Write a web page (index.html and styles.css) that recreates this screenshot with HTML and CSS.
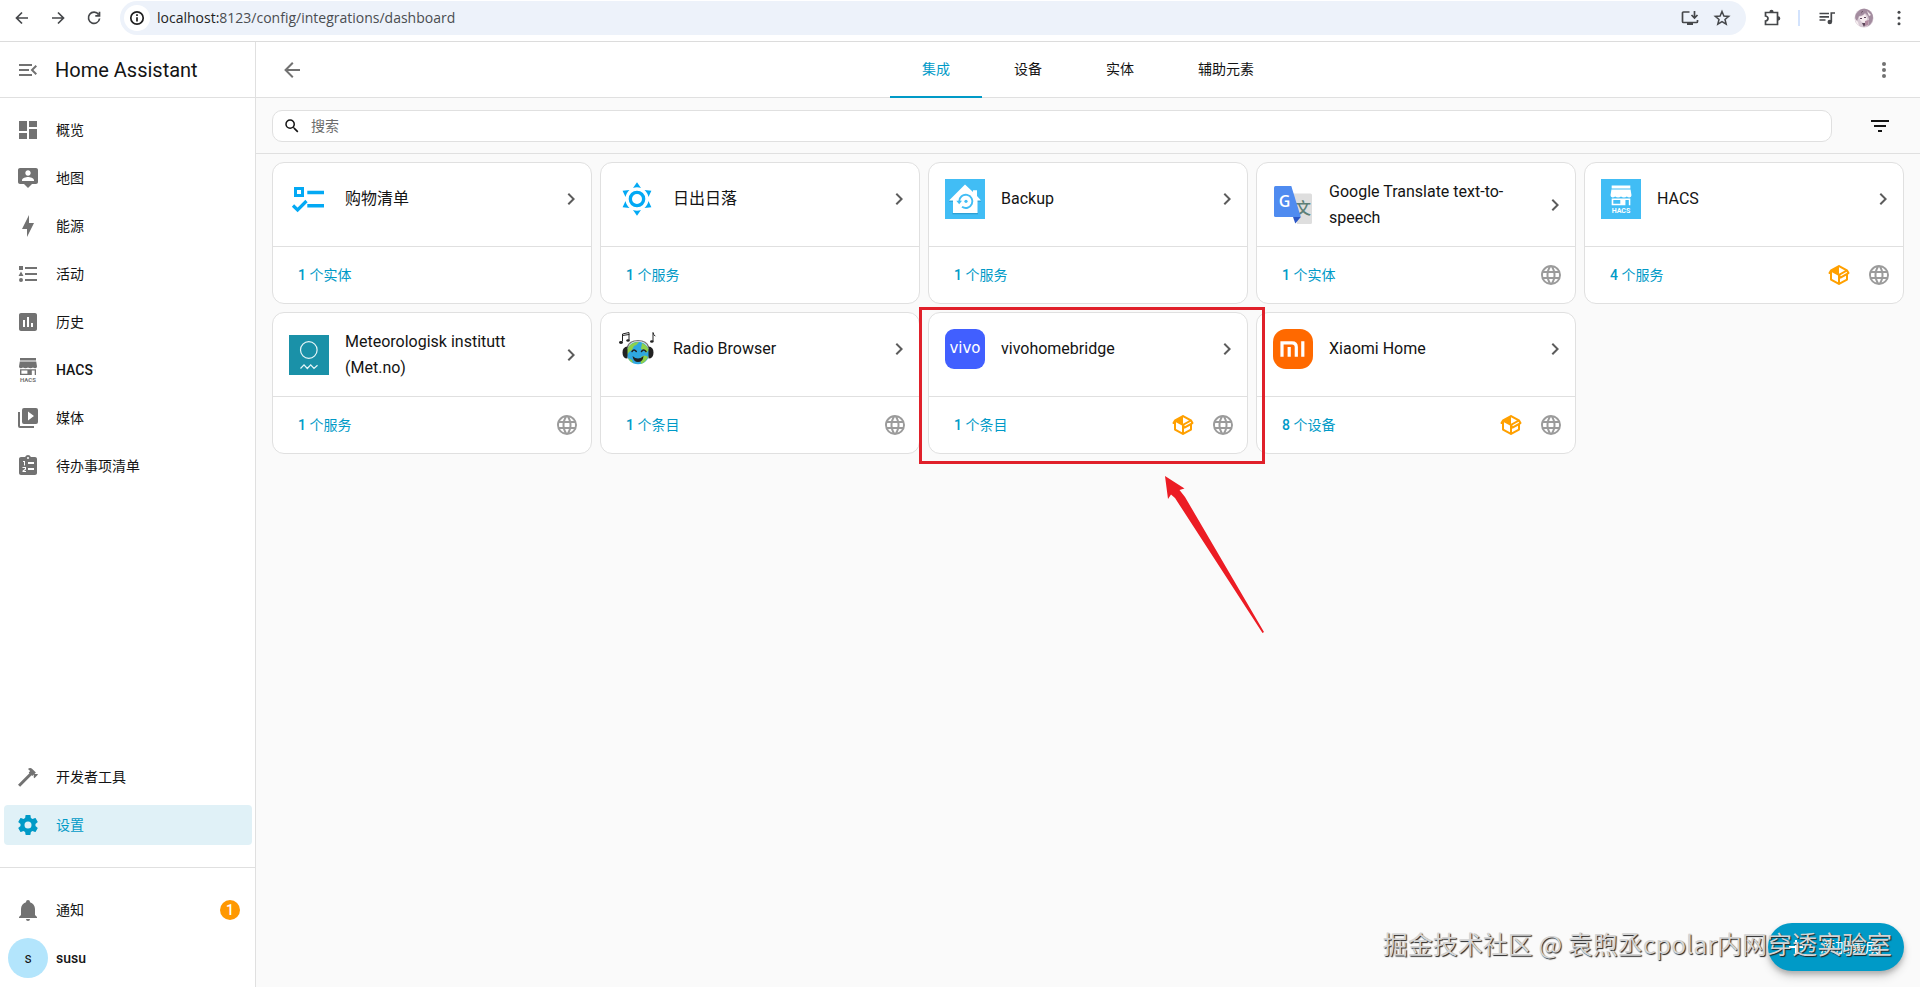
FILE: index.html
```html
<!DOCTYPE html>
<html lang="zh-CN">
<head>
<meta charset="utf-8">
<title>设置 – Home Assistant</title>
<link rel="stylesheet" href="styles.css">
</head>
<body>
<svg class="defs" aria-hidden="true">
  <symbol id="arrow-left" viewBox="0 0 24 24"><path d="M20,11V13H8L13.5,18.5L12.08,19.92L4.16,12L12.08,4.08L13.5,5.5L8,11H20Z"/></symbol>
  <symbol id="chevron" viewBox="0 0 24 24"><path d="M8.59,16.58L13.17,12L8.59,7.41L10,6L16,12L10,18L8.59,16.58Z"/></symbol>
  <symbol id="dots" viewBox="0 0 24 24"><circle cx="12" cy="6" r="2"/><circle cx="12" cy="12" r="2"/><circle cx="12" cy="18" r="2"/></symbol>
  <symbol id="web" viewBox="0 0 24 24"><path d="M16.36,14C16.44,13.34 16.5,12.68 16.5,12C16.5,11.32 16.44,10.66 16.36,10H19.74C19.9,10.64 20,11.31 20,12C20,12.69 19.9,13.36 19.74,14M14.59,19.56C15.19,18.45 15.65,17.25 15.97,16H18.92C17.96,17.65 16.43,18.93 14.59,19.56M14.34,14H9.66C9.56,13.34 9.5,12.68 9.5,12C9.5,11.32 9.56,10.65 9.66,10H14.34C14.43,10.65 14.5,11.32 14.5,12C14.5,12.68 14.43,13.34 14.34,14M12,19.96C11.17,18.76 10.5,17.43 10.09,16H13.91C13.5,17.43 12.83,18.76 12,19.96M8,8H5.08C6.03,6.34 7.57,5.06 9.4,4.44C8.8,5.55 8.35,6.75 8,8M5.08,16H8C8.35,17.25 8.8,18.45 9.4,19.56C7.57,18.93 6.03,17.65 5.08,16M4.26,14C4.1,13.36 4,12.69 4,12C4,11.31 4.1,10.64 4.26,10H7.64C7.56,10.66 7.5,11.32 7.5,12C7.5,12.68 7.56,13.34 7.64,14M12,4.03C12.83,5.23 13.5,6.57 13.91,8H10.09C10.5,6.57 11.17,5.23 12,4.03M18.92,8H15.97C15.65,6.75 15.19,5.55 14.59,4.44C16.43,5.07 17.96,6.34 18.92,8M12,2C6.47,2 2,6.5 2,12A10,10 0 0,0 12,22A10,10 0 0,0 22,12A10,10 0 0,0 12,2Z"/></symbol>
  <symbol id="package" viewBox="0 0 24 24"><path d="M2,10.96C1.5,10.68 1.35,10.07 1.63,9.59L3.13,7C3.24,6.8 3.41,6.66 3.6,6.58L11.43,2.18C11.59,2.06 11.79,2 12,2C12.21,2 12.41,2.06 12.57,2.18L20.47,6.62C20.66,6.72 20.82,6.88 20.91,7.08L22.36,9.6C22.64,10.08 22.47,10.69 22,10.96L21,11.54V16.5C21,16.88 20.79,17.21 20.47,17.38L12.57,21.82C12.41,21.94 12.21,22 12,22C11.79,22 11.59,21.94 11.43,21.82L3.53,17.38C3.21,17.21 3,16.88 3,16.5V10.96C2.7,11.13 2.32,11.14 2,10.96M12,4.15V4.15L12,10.85V10.85L17.96,7.5L12,4.15M5,15.91L11,19.29V12.58L5,9.21V15.91M19,15.91V12.69L14,15.59C13.67,15.77 13.3,15.76 13,15.6V19.29L19,15.91M13.85,13.36L20.13,9.73L19.55,8.72L13.27,12.35L13.85,13.36Z"/></symbol>
  <symbol id="shop" viewBox="0 0 24 24"><path fill-rule="evenodd" d="M4 0H20V2.6H4ZM3.800 3.400H20.200L21 8.400Q21 10.200 19.300 10.200Q17.700 10.200 17 9.400Q16 10.200 14.500 10.200Q13 10.200 12 9.400Q11 10.200 9.500 10.200Q8 10.200 7 9.400Q6 10.200 4.700 10.200Q3 10.200 3 8.400ZM4 11.200H20V17H18.700V12.400H15.800V17H4ZM5.400 12.400V15.700H11.400V12.400Z"/><text x="12" y="23.600" text-anchor="middle" class="shop-name">HACS</text></symbol>
</svg>

<header class="browser">
  <button class="tool" aria-label="后退"><svg class="i20" viewBox="0 0 20 20"><path class="line" d="M16 10H5M10 4.500 4.500 10 10 15.500"/></svg></button>
  <button class="tool" aria-label="前进"><svg class="i20" viewBox="0 0 20 20"><path class="line" d="M4 10H15M10 4.500 15.500 10 10 15.500"/></svg></button>
  <button class="tool" aria-label="重新加载"><svg class="i20" viewBox="0 0 20 20"><path class="line" d="M14.600 6.500A5.600 5.600 0 1 0 15.600 10.500M15.500 3.800V7.800H11.300"/></svg></button>
  <div class="address">
    <button class="site-info" aria-label="网站信息"><svg class="i20" viewBox="0 0 20 20"><circle class="line" cx="10" cy="10" r="6.200"/><path class="line" d="M10 9.200V13.400M10 6.300V7.900"/></svg></button>
    <div class="url"><span class="host">localhost:</span>8123/config/integrations/dashboard</div>
    <button class="tool small" aria-label="安装"><svg class="i20" viewBox="0 0 20 20"><path class="line" d="M9.500 4H3.500Q2.500 4 2.500 5V13.500Q2.500 14.500 3.500 14.500H16.500Q17.500 14.500 17.500 13.500V12M14.500 3V9.500M11.500 7 14.500 10 17.500 7"/><path d="M7 14.500H13V17H7Z"/></svg></button>
    <button class="tool small" aria-label="收藏"><svg class="i20" viewBox="0 0 20 20"><path class="line thin" d="M10 3.500 11.900 8 16.700 8.400 13 11.500 14.200 16.200 10 13.700 5.800 16.200 7 11.500 3.300 8.400 8.100 8Z"/></svg></button>
  </div>
  <button class="tool ext" aria-label="扩展程序"><svg class="i20" viewBox="0 0 20 20"><path class="line" d="M3.500 4.500H15.500V16.500H3.500V13Q6 12.500 6 10.500Q6 8.500 3.500 8Z"/><path d="M7.400 4A2 2.200 0 0 1 11.600 4ZM16 8.300A2.200 2 0 0 1 16 12.500Z"/></svg></button>
  <span class="bar"></span>
  <button class="tool media" aria-label="媒体控件"><svg class="i20" viewBox="0 0 20 20"><path class="line" d="M2.500 5.500H12M2.500 8.800H12M2.500 12H8.500M14.300 14V5H18"/><circle cx="12.800" cy="14" r="2.300"/></svg></button>
  <button class="tool face" aria-label="个人资料"><svg class="i20" viewBox="0 0 20 20"><circle cx="10" cy="10" r="9.500" fill="#d6c8d3"/><path fill="#a38c9f" d="M2 6Q6 0 12 1Q19 3 19 10Q18 16 14 18Q16 13 14 8L11 5Q9 8 5 8L3 13Q0 10 2 6Z"/><path fill="#f6edf0" d="M5 9Q9 8 11 6L13 10Q13 14 10 15Q6 14 5 9ZM13 3L17 7L15 8ZM1 11L4 14L5 18Q2 16 1 11Z"/><path fill="#5b4559" d="M6 10H8V11H6ZM10 9H12V10H10ZM8 15H12L10 19ZM8 3H9L7 6Z"/><path fill="#b08aa0" d="M11 13L15 12L14 17L11 18Z"/></svg></button>
  <button class="tool more" aria-label="菜单"><svg class="i20" viewBox="0 0 20 20"><circle cx="10" cy="4.300" r="1.500"/><circle cx="10" cy="10" r="1.500"/><circle cx="10" cy="15.700" r="1.500"/></svg></button>
</header>

<div class="app">
  <aside class="sidebar">
    <div class="brand">
      <button class="icon-btn" aria-label="收起侧边栏"><svg class="i24" viewBox="0 0 24 24"><path d="M21,15.61L19.59,17L14.58,12L19.59,7L21,8.390L17.44,12L21,15.610M3,6H16V8H3V6M3,13V11H13V13H3M3,18V16H16V18H3Z"/></svg></button>
      <h1>Home Assistant</h1>
    </div>
    <nav class="menu">
      <a href="#overview"><svg class="i24" viewBox="0 0 24 24"><path d="M13,3V9H21V3M13,21H21V11H13M3,21H11V15H3M3,13H11V3H3V13Z"/></svg>概览</a>
      <a href="#map"><svg class="i24" viewBox="0 0 24 24"><path fill-rule="evenodd" d="M20 2H4C2.900 2 2 2.900 2 4V16C2 17.100 2.900 18 4 18H8L12 22L16 18H20C21.110 18 22 17.110 22 16V4C22 2.900 21.110 2 20 2M12 4.300C13.500 4.300 14.700 5.500 14.700 7S13.500 9.700 12 9.700 9.300 8.500 9.300 7 10.500 4.300 12 4.300M18 15H6V14.100C6 12.100 10 11 12 11S18 12.100 18 14.100V15Z"/></svg>地图</a>
      <a href="#energy"><svg class="i24" viewBox="0 0 24 24"><path d="M11 15H6L13 1V9H18L11 23V15Z"/></svg>能源</a>
      <a href="#logbook"><svg class="i24" viewBox="0 0 24 24"><path d="M5,9.500L7.500,14H2.500L5,9.500M3,4H7V8H3V4M5,20A2,2 0 0,0 7,18A2,2 0 0,0 5,16A2,2 0 0,0 3,18A2,2 0 0,0 5,20M9,5V7H21V5H9M9,19H21V17H9V19M9,13H21V11H9V13Z"/></svg>活动</a>
      <a href="#history"><svg class="i24" viewBox="0 0 24 24"><path fill-rule="evenodd" d="M19 3H5C3.900 3 3 3.900 3 5V19C3 20.100 3.900 21 5 21H19C20.100 21 21 20.100 21 19V5C21 3.900 20.100 3 19 3M9 17H7V10H9V17M13 17H11V7H13V17M17 17H15V13H17V17Z"/></svg>历史</a>
      <a href="#hacs" class="latin"><svg class="i24"><use href="#shop"/></svg>HACS</a>
      <a href="#media"><svg class="i24" viewBox="0 0 24 24"><path fill-rule="evenodd" d="M4,6H2V20A2,2 0 0,0 4,22H18V20H4V6M20,2H8A2,2 0 0,0 6,4V16A2,2 0 0,0 8,18H20A2,2 0 0,0 22,16V4A2,2 0 0,0 20,2M12,14.500V5.500L18,10L12,14.500Z"/></svg>媒体</a>
      <a href="#todo"><svg class="i24" viewBox="0 0 24 24"><path fill-rule="evenodd" d="M19 3H14.820C14.400 1.840 13.300 1 12 1S9.600 1.840 9.180 3H5C3.900 3 3 3.900 3 5V19C3 20.100 3.900 21 5 21H19C20.100 21 21 20.100 21 19V5C21 3.900 20.100 3 19 3M12 3A1 1 0 1 1 12 5A1 1 0 0 1 12 3M12 8H18V10H12ZM12 14H18V16H12ZM7 7H9V11.500H8V8H7ZM6.500 13H10V15.500L8 17H10V18H6.500V16.700L9 14.800V14H6.500Z"/></svg>待办事项清单</a>
      <span class="spacer"></span>
      <a href="#dev"><svg class="i24" viewBox="0 0 24 24"><path d="M2 19.630L13.430 8.200L12.720 7.500L14.140 6.070L12 3.890C13.200 2.700 15.090 2.700 16.270 3.890L19.870 7.500L18.450 8.910H21.290L22 9.620L18.450 13.210L17.740 12.500V9.620L16.270 11.040L15.560 10.330L4.130 21.760L2 19.630Z"/></svg>开发者工具</a>
      <a href="#config" class="current" aria-current="page"><svg class="i24" viewBox="0 0 24 24"><path d="M12,15.5A3.5,3.5 0 0,1 8.5,12A3.5,3.5 0 0,1 12,8.5A3.5,3.5 0 0,1 15.5,12A3.5,3.5 0 0,1 12,15.5M19.43,12.97C19.47,12.65 19.5,12.33 19.5,12C19.5,11.67 19.47,11.34 19.43,11L21.54,9.37C21.73,9.22 21.78,8.95 21.66,8.73L19.66,5.27C19.54,5.05 19.27,4.96 19.05,5.05L16.56,6.05C16.04,5.66 15.5,5.32 14.87,5.07L14.5,2.42C14.46,2.18 14.25,2 14,2H10C9.75,2 9.54,2.18 9.5,2.42L9.13,5.07C8.5,5.32 7.96,5.66 7.44,6.05L4.95,5.05C4.73,4.96 4.46,5.05 4.34,5.27L2.34,8.73C2.21,8.95 2.27,9.22 2.46,9.37L4.57,11C4.53,11.34 4.5,11.67 4.5,12C4.5,12.33 4.53,12.65 4.57,12.97L2.46,14.63C2.27,14.78 2.21,15.05 2.34,15.27L4.34,18.73C4.46,18.95 4.73,19.03 4.95,18.95L7.44,17.94C7.96,18.34 8.5,18.68 9.13,18.93L9.5,21.58C9.54,21.82 9.75,22 10,22H14C14.25,22 14.46,21.82 14.5,21.58L14.87,18.93C15.5,18.67 16.04,18.34 16.56,17.94L19.05,18.95C19.27,19.03 19.54,18.95 19.66,18.73L21.66,15.27C21.78,15.05 21.73,14.78 21.54,14.63L19.43,12.97Z"/></svg>设置</a>
    </nav>
    <nav class="menu account">
      <a href="#notifications"><svg class="i24" viewBox="0 0 24 24"><path d="M21,19V20H3V19L5,17V11C5,7.900 7.030,5.170 10,4.290C10,4.190 10,4.100 10,4A2,2 0 0,1 12,2A2,2 0 0,1 14,4C14,4.100 14,4.190 14,4.290C16.970,5.170 19,7.900 19,11V17L21,19M14,21A2,2 0 0,1 12,23A2,2 0 0,1 10,21"/></svg>通知<span class="count">1</span></a>
      <a href="#profile" class="profile latin"><span class="avatar">s</span>susu</a>
    </nav>
  </aside>

  <main class="main">
    <div class="toolbar">
      <button class="icon-btn" aria-label="返回"><svg class="i24"><use href="#arrow-left"/></svg></button>
      <nav class="tabs">
        <a href="#integrations" class="active" aria-current="page">集成</a>
        <a href="#devices">设备</a>
        <a href="#entities">实体</a>
        <a href="#helpers">辅助元素</a>
      </nav>
      <button class="icon-btn" aria-label="更多"><svg class="i24"><use href="#dots"/></svg></button>
    </div>
    <div class="search-row">
      <label class="search">
        <svg class="i18" viewBox="0 0 24 24"><path d="M9.5,3A6.5,6.5 0 0,1 16,9.5C16,11.11 15.41,12.59 14.44,13.73L14.71,14H15.5L20.5,19L19,20.5L14,15.5V14.71L13.73,14.44C12.59,15.41 11.11,16 9.5,16A6.5,6.5 0 0,1 3,9.5A6.5,6.5 0 0,1 9.5,3M9.5,5C7,5 5,7 5,9.5C5,12 7,14 9.5,14C12,14 14,12 14,9.5C14,7 12,5 9.5,5Z"/></svg>
        <input type="text" placeholder="搜索" aria-label="搜索">
      </label>
      <button class="icon-btn filter" aria-label="筛选"><svg class="i24" viewBox="0 0 24 24"><path d="M6,13H18V11H6M3,6V8H21V6M10,18H14V16H10V18Z"/></svg></button>
    </div>

    <section class="cards">
      <article class="card">
        <a class="head" href="#shopping_list">
          <svg class="logo sky" viewBox="0 0 40 40"><path fill-rule="evenodd" d="M5 8H15V18H5ZM8 11V15H12V11ZM18.300 11.800H35V15.200H18.300ZM18.300 25H35V28.400H18.300Z"/><path d="M4 26.500 8.600 31 17.500 22" fill="none" stroke="currentColor" stroke-width="3.200"/></svg>
          <h2>购物清单</h2><svg class="i24 next"><use href="#chevron"/></svg>
        </a>
        <div class="foot"><a href="#e1"><span class="num">1</span> 个实体</a></div>
      </article>
      <article class="card">
        <a class="head" href="#sun">
          <svg class="logo sky" viewBox="0 0 24 24"><path d="M12,7A5,5 0 0,1 17,12A5,5 0 0,1 12,17A5,5 0 0,1 7,12A5,5 0 0,1 12,7M12,9A3,3 0 0,0 9,12A3,3 0 0,0 12,15A3,3 0 0,0 15,12A3,3 0 0,0 12,9M12,2L14.39,5.42C13.65,5.15 12.84,5 12,5C11.16,5 10.35,5.15 9.61,5.42L12,2M3.34,7L7.5,6.65C6.9,7.16 6.36,7.78 5.94,8.5C5.5,9.24 5.25,10 5.11,10.79L3.34,7M3.36,17L5.12,13.23C5.26,14 5.53,14.78 5.95,15.5C6.37,16.24 6.91,16.86 7.5,17.37L3.36,17M20.65,7L18.88,10.79C18.74,10 18.47,9.23 18.05,8.5C17.63,7.78 17.1,7.15 16.5,6.64L20.65,7M20.64,17L16.5,17.36C17.09,16.85 17.62,16.22 18.04,15.5C18.46,14.77 18.73,14 18.87,13.21L20.64,17M12,22L9.59,18.56C10.33,18.83 11.14,19 12,19C12.82,19 13.63,18.83 14.37,18.56L12,22Z"/></svg>
          <h2>日出日落</h2><svg class="i24 next"><use href="#chevron"/></svg>
        </a>
        <div class="foot"><a href="#s1"><span class="num">1</span> 个服务</a></div>
      </article>
      <article class="card">
        <a class="head" href="#backup">
          <svg class="logo" viewBox="0 0 40 40"><path fill="#41bdf5" d="M0 0H40V40H0Z"/><path fill="#2f9fd2" d="M7.500 34H33V35.200H7.500ZM4 21.500H8V22.700H4ZM32 21.500H36V22.700H32Z"/><path fill="#fff" d="M20 5.500 28 13V11.300H32V17L36 21.500H32.500V34H8V21.500H4Z"/><path fill="none" stroke="#41bdf5" stroke-width="1.900" d="M14.200 22.500A6.600 6.600 0 1 1 17 27.800"/><path fill="#41bdf5" d="M11.300 21.800H17L14.200 25.200Z"/><circle cx="21" cy="22.300" r="1.600" fill="#41bdf5"/></svg>
          <h2>Backup</h2><svg class="i24 next"><use href="#chevron"/></svg>
        </a>
        <div class="foot"><a href="#s2"><span class="num">1</span> 个服务</a></div>
      </article>
      <article class="card">
        <a class="head" href="#google_translate">
          <svg class="logo" viewBox="0 0 40 40"><path fill="#dedede" d="M19 8.500H37.500Q39 8.500 39 10V37.500Q39 39 37.500 39H24Z"/><text x="30" y="29" text-anchor="middle" class="wen">文</text><path fill="#2a56c6" d="M20 32H27.800L22.300 38.500Z"/><path fill="#4f8bf0" d="M2.500 1H18.300L27.800 32H2.500Q1 32 1 30.500V2.500Q1 1 2.500 1Z"/><text x="11.500" y="22" text-anchor="middle" class="gee">G</text></svg>
          <h2>Google Translate text-to-speech</h2><svg class="i24 next"><use href="#chevron"/></svg>
        </a>
        <div class="foot"><a href="#e2"><span class="num">1</span> 个实体</a><svg class="i24 cloud"><use href="#web"/></svg></div>
      </article>
      <article class="card">
        <a class="head" href="#hacs">
          <svg class="logo white" viewBox="0 0 40 40"><path fill="#41bdf5" d="M0 0H40V40H0Z"/><use href="#shop" x="6" y="6" width="28" height="29"/></svg>
          <h2>HACS</h2><svg class="i24 next"><use href="#chevron"/></svg>
        </a>
        <div class="foot"><a href="#s4"><span class="num">4</span> 个服务</a><svg class="i24 custom"><use href="#package"/></svg><svg class="i24 cloud"><use href="#web"/></svg></div>
      </article>
      <article class="card">
        <a class="head" href="#met">
          <svg class="logo" viewBox="0 0 40 40"><path fill="#1a91a8" d="M0 0H40V40H0Z"/><g fill="none" stroke="#e6f6f8" stroke-width="1.200"><circle cx="19.800" cy="15" r="8.300"/><path d="M11.500 33.500 15 29.800 18.300 33.500 21.700 29.800 25 33.500 28.500 30.200"/></g></svg>
          <h2>Meteorologisk institutt (Met.no)</h2><svg class="i24 next"><use href="#chevron"/></svg>
        </a>
        <div class="foot"><a href="#s5"><span class="num">1</span> 个服务</a><svg class="i24 cloud"><use href="#web"/></svg></div>
      </article>
      <article class="card">
        <a class="head" href="#radio_browser">
          <svg class="logo" viewBox="0 0 40 40"><circle cx="21" cy="24" r="11.300" fill="#2fa8e0"/><path fill="#8fd14a" d="M13 16Q17 12.500 22 13Q20 16 17 17L15 21Q11 23 10 26Q9 20 13 16ZM25 14Q30 16 32 21L29 24L27 21L24 20ZM24 28Q28 25 31 28Q29 33 24 35Q23 31 24 28ZM11 29L15 31L16 34Q12 32 11 29Z"/><g fill="none" stroke="#222" stroke-linecap="round"><path stroke-width="1.400" stroke="#777" d="M10.500 18C13 9.500 29 9.500 31.500 18"/><path stroke-width="1.500" d="M15 22.500Q17 19.500 19.300 22.500M24.500 22.500Q26.500 19.500 29 22.500"/><path stroke-width="1" d="M5.500 12V5L12 3.500V11M5.500 6.500 12 5.500M36 12V3.500Q36.500 6 38 7"/></g><path fill="#222" d="M15.500 27Q21 32 26.500 27Q26 33 21 33Q16.500 33 15.500 27ZM10.500 17.500V29.500Q5.500 29.500 5.500 23.500Q5.500 18 10.500 17.500ZM31.500 17.500V29.500Q36.500 29.500 36.500 23.500Q36.500 18 31.500 17.500Z"/><g fill="#222"><ellipse cx="4" cy="13.500" rx="2" ry="1.400"/><ellipse cx="11" cy="11.500" rx="1.700" ry="1.200"/><ellipse cx="34.800" cy="12.500" rx="1.800" ry="1.300"/></g></svg>
          <h2>Radio Browser</h2><svg class="i24 next"><use href="#chevron"/></svg>
        </a>
        <div class="foot"><a href="#i1"><span class="num">1</span> 个条目</a><svg class="i24 cloud"><use href="#web"/></svg></div>
      </article>
      <article class="card marked">
        <a class="head" href="#vivohomebridge">
          <svg class="logo" viewBox="0 0 40 40"><rect width="40" height="40" rx="9" fill="#415fff"/><text x="20" y="24" text-anchor="middle" class="vivo">vivo</text></svg>
          <h2>vivohomebridge</h2><svg class="i24 next"><use href="#chevron"/></svg>
        </a>
        <div class="foot"><a href="#i2"><span class="num">1</span> 个条目</a><svg class="i24 custom"><use href="#package"/></svg><svg class="i24 cloud"><use href="#web"/></svg></div>
        <span class="frame"></span>
        <svg class="pointer" viewBox="0 0 99 157"><path fill="#ec1c24" d="M0 0 19.500 12.500 14.500 14 20 21 99 156 97.500 157 10 22 6 18.500 3 23Z"/></svg>
      </article>
      <article class="card">
        <a class="head" href="#xiaomi_home">
          <svg class="logo" viewBox="0 0 40 40"><rect width="40" height="40" rx="13" fill="#ff6900"/><path fill="none" stroke="#fff" stroke-width="3.200" d="M9 27.700V13.800H19Q23.300 13.800 23.300 18V27.700M16.200 18V27.700M29.800 12.200V27.700"/></svg>
          <h2>Xiaomi Home</h2><svg class="i24 next"><use href="#chevron"/></svg>
        </a>
        <div class="foot"><a href="#d8"><span class="num">8</span> 个设备</a><svg class="i24 custom"><use href="#package"/></svg><svg class="i24 cloud"><use href="#web"/></svg></div>
      </article>
    </section>

    <button class="fab"><svg class="i24" viewBox="0 0 24 24"><path d="M19,13H13V19H11V13H5V11H11V5H13V11H19V13Z"/></svg>添加集成</button>
    <div class="watermark">掘金技术社区 @ 袁煦丞cpolar内网穿透实验室</div>
  </main>
</div>
</body>
</html>
```

FILE: styles.css
```css
* { box-sizing: border-box; }

body {
  margin: 0;
  height: 100vh;
  display: flex;
  flex-direction: column;
  font-family: Roboto, "Noto Sans CJK SC", sans-serif;
  font-size: 14px;
  line-height: 20px;
  color: #141414;
  background: #fafafa;
}

a { color: inherit; text-decoration: none; }
button { padding: 0; border: 0; background: none; color: inherit; font: inherit; }
h1, h2 { margin: 0; font-weight: 400; }
svg { display: block; flex: none; fill: currentColor; }

.defs { display: none; }
.i18 { width: 18px; height: 18px; }
.i20 { width: 20px; height: 20px; }
.i24 { width: 24px; height: 24px; }
.line { fill: none; stroke: currentColor; stroke-width: 1.7; }
.thin { stroke-width: 1.5; }
.shop-name { font: 700 6px Roboto, sans-serif; }

/* Browser bar */
.browser {
  flex: none;
  display: flex;
  align-items: center;
  height: 42px;
  padding: 0 4px 6px 4px;
  border-bottom: 1px solid #dcdcdc;
  background: #fff;
  color: #45474a;
}
.tool { display: grid; place-items: center; width: 36px; height: 34px; }
.tool.small { width: 32px; }
.tool.ext { margin-left: 8px; }
.tool.face, .tool.media { width: 37px; }
.tool.more { width: 34px; }
.bar { width: 2px; height: 16px; margin: 0 8px; background: #d3e3fd; }
.address {
  flex: 1;
  display: flex;
  align-items: center;
  height: 34px;
  margin-left: 8px;
  padding: 0 8px 0 4px;
  border-radius: 17px;
  background: #edf2fa;
}
.site-info {
  display: grid;
  place-items: center;
  width: 26px;
  height: 26px;
  border-radius: 13px;
  background: #fff;
  color: #1f1f1f;
}
.url {
  flex: 1;
  margin-left: 7px;
  font-family: "Open Sans", "Noto Sans", sans-serif;
  color: #4a4d51;
}
.host { color: #1f1f1f; }

/* App shell */
.app { flex: 1; min-height: 0; display: flex; }
.icon-btn { display: grid; place-items: center; width: 48px; height: 48px; color: #727272; }

.sidebar {
  flex: none;
  display: flex;
  flex-direction: column;
  width: 256px;
  border-right: 1px solid #e0e0e0;
  background: #fff;
}
.brand {
  display: flex;
  align-items: center;
  height: 56px;
  padding-left: 4px;
  border-bottom: 1px solid #e0e0e0;
}
.brand h1 { margin-left: 3px; font-size: 20px; }
.menu {
  flex: 1;
  display: flex;
  flex-direction: column;
  gap: 8px;
  padding: 12px 3px 22px 4px;
}
.menu a {
  display: flex;
  align-items: center;
  gap: 16px;
  height: 40px;
  padding: 0 12px;
  border-radius: 4px;
}
.menu a svg { color: #727272; }
.menu .current { background: #e0f1f7; color: #009ac7; }
.menu .current svg { color: #009ac7; }
.menu .latin { font-weight: 500; }
.spacer { flex: 1; }
.account { flex: none; padding: 22px 3px 9px 4px; border-top: 1px solid #e0e0e0; }
.count {
  width: 20px;
  height: 20px;
  margin-left: auto;
  border-radius: 10px;
  background: #ff9800;
  color: #fff;
  font-weight: 500;
  text-align: center;
}
.menu .profile { gap: 8px; padding-left: 4px; }
.avatar {
  width: 40px;
  height: 40px;
  border-radius: 20px;
  background: #b3e5fc;
  font-weight: 400;
  line-height: 40px;
  text-align: center;
}

.main { flex: 1; min-width: 0; position: relative; }
.toolbar {
  display: flex;
  align-items: center;
  justify-content: space-between;
  height: 56px;
  padding: 0 12px;
  border-bottom: 1px solid #e0e0e0;
  background: #fff;
}
.tabs { display: flex; height: 56px; }
.tabs a {
  display: flex;
  align-items: center;
  padding: 0 32px;
  border-bottom: 2px solid transparent;
}
.tabs .active { border-color: #009ac7; color: #009ac7; }

.search-row {
  display: flex;
  align-items: center;
  gap: 24px;
  height: 56px;
  padding: 0 16px;
  border-bottom: 1px solid #e0e0e0;
}
.search {
  flex: 1;
  display: flex;
  align-items: center;
  gap: 8px;
  height: 32px;
  padding: 0 10px;
  border: 1px solid #e0e0e0;
  border-radius: 10px;
  background: #fff;
}
.search input { flex: 1; border: 0; outline: 0; background: none; font: inherit; }
.search input::placeholder { color: #6b6b6b; }
.filter { color: #141414; }

/* Integration cards */
.cards {
  display: grid;
  grid-template-columns: repeat(auto-fill, minmax(300px, 1fr));
  gap: 8px;
  padding: 8px 16px;
}
.card {
  position: relative;
  display: flex;
  flex-direction: column;
  border: 1px solid #e0e0e0;
  border-radius: 12px;
  background: #fff;
}
.head {
  display: grid;
  grid-template-columns: 40px 1fr 24px;
  column-gap: 16px;
  align-items: center;
  align-content: start;
  min-height: 84px;
  padding: 16px 8px 15px 16px;
  border-bottom: 1px solid #e0e0e0;
}
.head h2 { font-size: 16px; line-height: 26px; }
.logo { width: 40px; height: 40px; }
.sky { color: #03a9f4; }
.white { color: #fff; }
.next { color: #5c5c5c; }
.foot {
  display: flex;
  align-items: center;
  gap: 16px;
  height: 56px;
  padding: 0 12px 0 25px;
  color: #009ac7;
}
.foot a { flex: 1; }
.num { font-weight: 500; }
.custom { color: #ffa000; }
.cloud { color: #9b9b9b; }
.wen { font: 500 16px "Noto Sans CJK SC", sans-serif; fill: #5d7f77; }
.gee { font: 600 16px "Open Sans", sans-serif; fill: #fff; }
.vivo { font: 400 15px "DejaVu Sans", sans-serif; fill: #fff; }

/* Annotation over the vivo card */
.marked { z-index: 1; }
.frame { position: absolute; inset: -6px -18px -11px -10px; border: 3px solid #e0202a; }
.pointer { position: absolute; left: 236px; top: 163px; width: 99px; height: 157px; }

.fab {
  position: absolute;
  right: 16px;
  bottom: 16px;
  display: flex;
  align-items: center;
  gap: 12px;
  height: 48px;
  padding: 0 24px 0 16px;
  border-radius: 24px;
  background: #009ac7;
  box-shadow: 0 3px 5px rgba(0, 0, 0, .2), 0 6px 10px rgba(0, 0, 0, .14);
  color: #fff;
  font-size: 15px;
}
.watermark {
  position: absolute;
  right: 28px;
  bottom: 26px;
  font-family: "Noto Sans CJK SC", sans-serif;
  font-size: 25px;
  line-height: 36px;
  color: #d4d4d4;
  text-shadow: 1px 1px 1px #222;
  white-space: nowrap;
}
```
